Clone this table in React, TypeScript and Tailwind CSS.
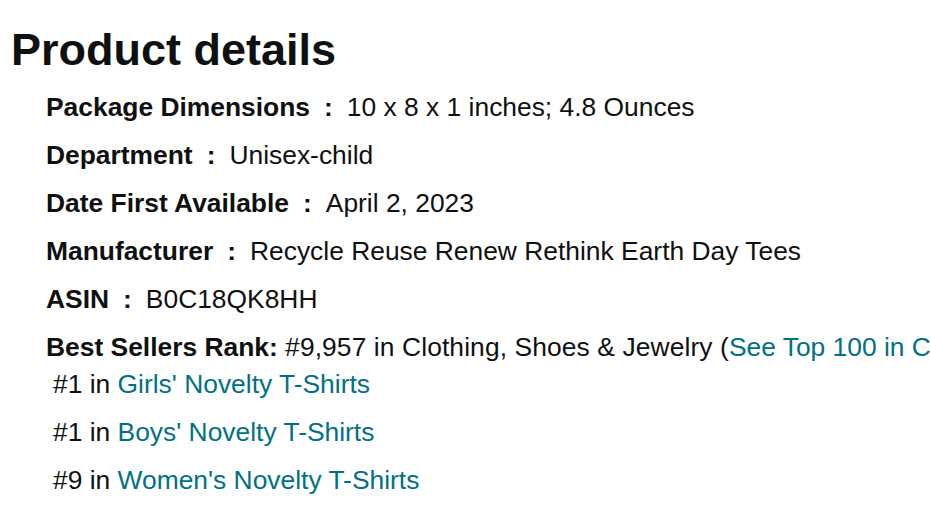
const details = [
  { label: 'Package Dimensions', value: '10 x 8 x 1 inches; 4.8 Ounces' },
  { label: 'Department', value: 'Unisex-child' },
  { label: 'Date First Available', value: 'April 2, 2023' },
  { label: 'Manufacturer', value: 'Recycle Reuse Renew Rethink Earth Day Tees' },
  { label: 'ASIN', value: 'B0C18QK8HH' },
]

const ranks = [
  { rank: '#1', category: "Girls' Novelty T-Shirts" },
  { rank: '#1', category: "Boys' Novelty T-Shirts" },
  { rank: '#9', category: "Women's Novelty T-Shirts" },
]

export default function App() {
  return (
    <div className="w-[931px] h-[523px] overflow-hidden bg-white text-[#0f1111] font-['Liberation_Sans',Arial,sans-serif]">
      <h2 className="pl-[11px] pt-[22px] text-[45px] leading-[56px] font-bold">Product details</h2>
      <ul className="mt-[5px] pl-[46px] text-[26.4px] leading-[48px] whitespace-nowrap">
        {details.map(d => (
          <li key={d.label}>
            <span className="font-bold">{d.label}</span>
            <span className="font-bold pl-[14px] pr-[14px]">:</span>
            <span>{d.value}</span>
          </li>
        ))}
        <li>
          <span className="font-bold">Best Sellers Rank:</span>{' '}
          <span className="tracking-[0.1px]">#9,957 in Clothing, Shoes &amp; Jewelry (</span>
          <a className="text-[#007185]">See Top 100 in Clothing, Shoes &amp; Jewelry</a>)
          <ul className="-mt-[11px] pl-[7px]">
            {ranks.map(r => (
              <li key={r.category}>
                {r.rank} in <a className="text-[#007185]">{r.category}</a>
              </li>
            ))}
          </ul>
        </li>
      </ul>
    </div>
  )
}
